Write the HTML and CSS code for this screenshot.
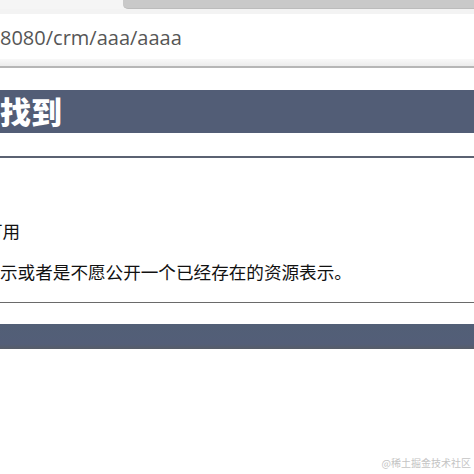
FILE: index.html
```html
<!DOCTYPE html>
<html lang="zh-CN">
<head>
<meta charset="utf-8">
<title>HTTP状态 404 - 未找到</title>
<link rel="stylesheet" href="styles.css">
</head>
<body>
<div class="browser">
  <div class="tabstrip">
    <div class="tab-gap"></div>
    <div class="tab"></div>
  </div>
  <div class="toolbar">
    <div class="urlbar"><span class="url">8080/crm/aaa/aaaa</span></div>
    <div class="toolbar-foot"></div>
  </div>
  <div class="page">
    <h1 class="title"><span class="title-text">找到</span></h1>
    <hr class="line">
    <p class="msg"><span class="msg-text">可用</span></p>
    <p class="desc"><span class="desc-text">示或者是不愿公开一个已经存在的资源表示。</span></p>
    <hr class="line-thin">
    <h3 class="footer-bar"></h3>
  </div>
  <div class="watermark">@稀土掘金技术社区</div>
</div>
</body>
</html>
```
FILE: styles.css
```css
html, body {
  margin: 0;
  padding: 0;
  background: #ffffff;
}
.browser {
  position: relative;
  width: 474px;
  height: 474px;
  overflow: hidden;
  background: #ffffff;
  font-family: "Noto Sans CJK SC", "Noto Sans", sans-serif;
}
.tabstrip {
  display: flex;
  height: 9px;
  background: #f4f4f4;
}
.tab-gap {
  width: 123px;
  background: #f5f5f5;
}
.tab {
  flex: 1;
  background: #c9c9c9;
  border-bottom-left-radius: 5px;
  border-bottom: 1px solid #bcbcbc;
}
.toolbar {
  background: #f3f3f3;
  padding-top: 5px;
  border-bottom: 2px solid #b6b6b6;
}
.urlbar {
  height: 42px;
  padding-top: 3px;
  background: #ffffff;
  line-height: 42px;
  white-space: nowrap;
  overflow: hidden;
}
.url {
  font-family: "Open Sans", "Noto Sans", sans-serif;
  font-size: 20px;
  color: #565656;
}
.toolbar-foot {
  height: 7px;
  background: linear-gradient(#f8f8f8, #ececec);
}
.page {
  display: flex;
  flex-direction: column;
  overflow: hidden;
}
.title {
  margin: 22px 0 0 0;
  height: 43px;
  line-height: 42px;
  background: #525d76;
  color: #ffffff;
  font-size: 31px;
  font-weight: 900;
  white-space: nowrap;
  overflow: hidden;
}
.title-text {
  display: inline-block;
  margin-left: 0;
}
.line {
  margin: 23px 0 0 0;
  height: 2px;
  border: none;
  background: #5b6272;
}
.msg, .desc {
  margin: 0;
  height: 24px;
  line-height: 24px;
  font-size: 17.6px;
  color: #111111;
  white-space: nowrap;
  overflow: hidden;
}
.msg {
  margin-top: 61px;
}
.msg-text {
  display: inline-block;
  margin-left: -15px;
}
.desc {
  margin-top: 17px;
}
.desc-text {
  display: inline-block;
  margin-left: 0;
}
.line-thin {
  margin: 18px 0 0 0;
  height: 1px;
  border: none;
  background: #6a6a6a;
}
.footer-bar {
  margin: 21px 0 0 0;
  height: 25px;
  background: linear-gradient(#525f76 0, #535e78 80%, #575d68 100%);
}
.watermark {
  position: absolute;
  right: 3px;
  bottom: 5px;
  font-size: 10px;
  line-height: 12px;
  color: #c4c4c4;
}
```
